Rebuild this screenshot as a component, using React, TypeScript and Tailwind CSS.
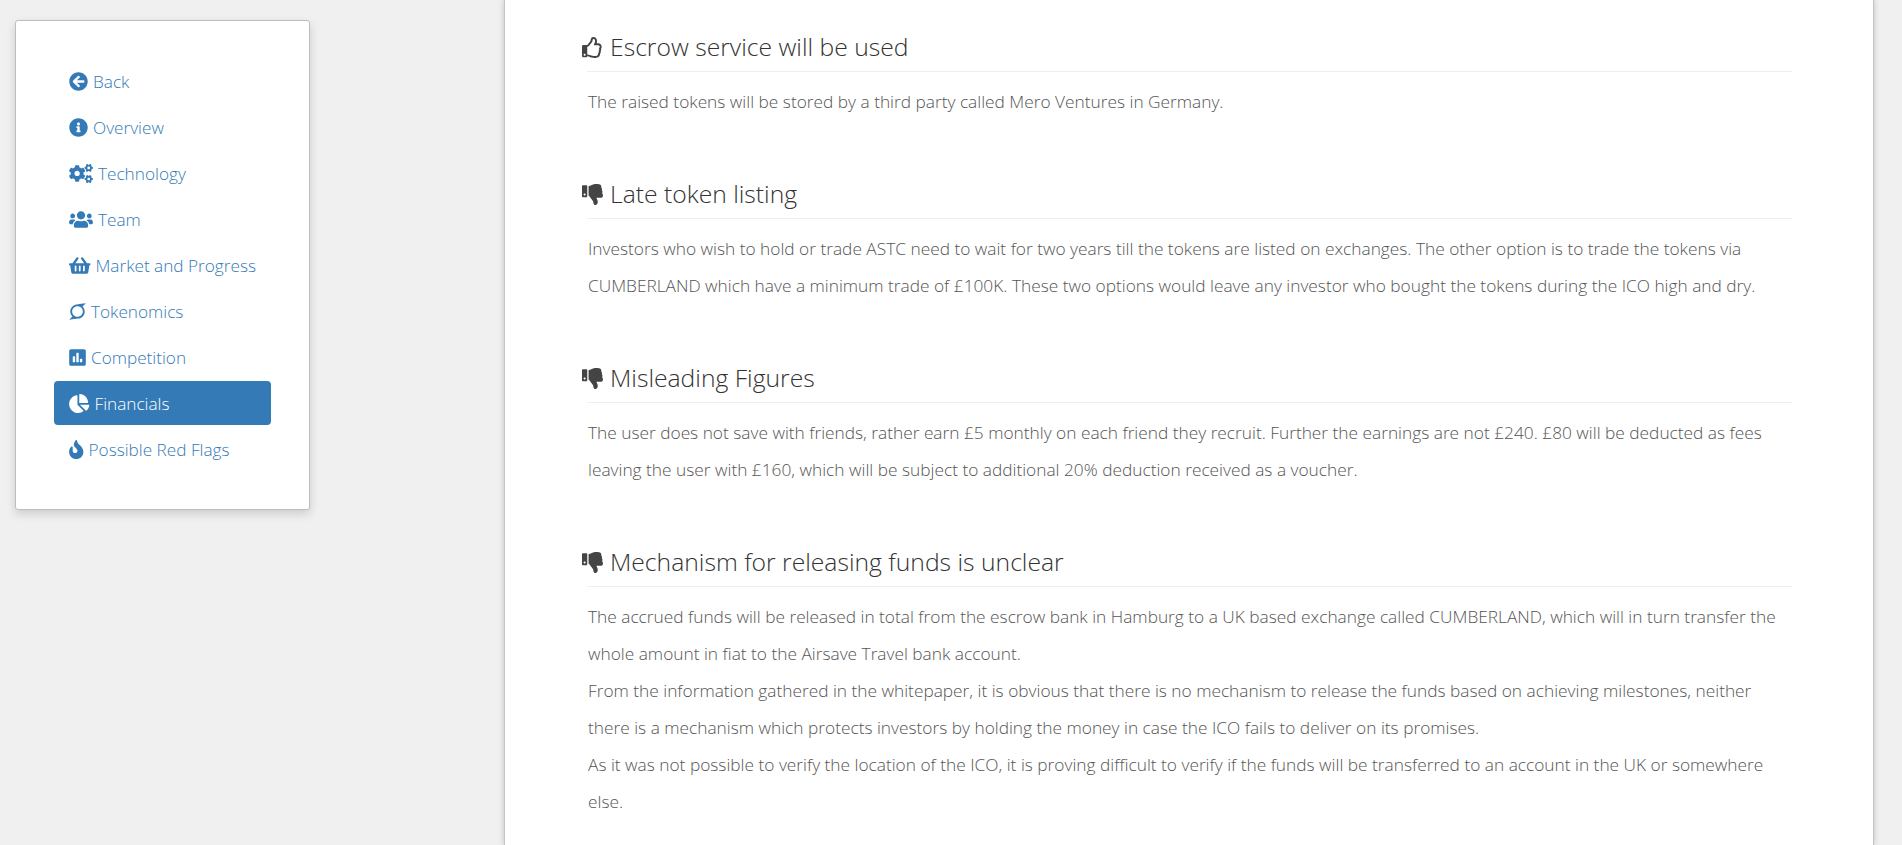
import { FaArrowCircleLeft, FaInfoCircle, FaCogs, FaUsers, FaShoppingBasket, FaSuperpowers, FaPoll, FaChartPie, FaFire, FaRegThumbsUp, FaThumbsDown } from 'react-icons/fa';
import type { IconType } from 'react-icons';

const navItems: { label: string; icon: IconType; iconClass: string; active?: boolean }[] = [
  { label: 'Back', icon: FaArrowCircleLeft, iconClass: 'w-[19px]' },
  { label: 'Overview', icon: FaInfoCircle, iconClass: 'w-[19px]' },
  { label: 'Technology', icon: FaCogs, iconClass: 'w-[24px]' },
  { label: 'Team', icon: FaUsers, iconClass: 'w-[24px]' },
  { label: 'Market and Progress', icon: FaShoppingBasket, iconClass: 'w-[21.5px]' },
  { label: 'Tokenomics', icon: FaSuperpowers, iconClass: 'w-[17px]' },
  { label: 'Competition', icon: FaPoll, iconClass: 'w-[17px]' },
  { label: 'Financials', icon: FaChartPie, iconClass: 'w-[20.5px]', active: true },
  { label: 'Possible Red Flags', icon: FaFire, iconClass: 'w-[14.5px]' },
];

const sections: { title: string; good?: boolean; lines: string[] }[] = [
  {
    title: 'Escrow service will be used',
    good: true,
    lines: ['The raised tokens will be stored by a third party called Mero Ventures in Germany.'],
  },
  {
    title: 'Late token listing',
    lines: [
      'Investors who wish to hold or trade ASTC need to wait for two years till the tokens are listed on exchanges. The other option is to trade the tokens via CUMBERLAND which have a minimum trade of £100K. These two options would leave any investor who bought the tokens during the ICO high and dry.',
    ],
  },
  {
    title: 'Misleading Figures',
    lines: [
      'The user does not save with friends, rather earn £5 monthly on each friend they recruit. Further the earnings are not £240. £80 will be deducted as fees leaving the user with £160, which will be subject to additional 20% deduction received as a voucher.',
    ],
  },
  {
    title: 'Mechanism for releasing funds is unclear',
    lines: [
      'The accrued funds will be released in total from the escrow bank in Hamburg to a UK based exchange called CUMBERLAND, which will in turn transfer the whole amount in fiat to the Airsave Travel bank account.',
      'From the information gathered in the whitepaper, it is obvious that there is no mechanism to release the funds based on achieving milestones, neither there is a mechanism which protects investors by holding the money in case the ICO fails to deliver on its promises.',
      'As it was not possible to verify the location of the ICO, it is proving difficult to verify if the funds will be transferred to an account in the UK or somewhere else.',
    ],
  },
];

export default function App() {
  return (
    <div className="flex h-[845px] items-start overflow-hidden bg-[#f0f0f0] font-['Open_Sans',sans-serif] font-light">
      {/* Sidebar */}
      <div className="ml-[15px] mt-[20px] w-[295px] shrink-0 rounded-[3px] border border-[#bdbdbd] bg-white px-[38px] py-[38px] shadow-[0_4px_10px_rgba(0,0,0,0.15)]">
        <ul className="flex flex-col gap-[2px]">
          {navItems.map((item) => {
            const Icon = item.icon;
            return (
              <li
                key={item.label}
                className={`flex h-[44px] items-center gap-[5px] rounded-[4px] px-[15px] text-[17.2px] ${item.active ? 'bg-[#337ab7] text-white' : 'text-[#337ab7]'}`}
              >
                <Icon className={`h-[19px] shrink-0 ${item.iconClass}`} />
                <span className="mt-[1px]">{item.label}</span>
              </li>
            );
          })}
        </ul>
      </div>

      {/* Main panel */}
      <div className="ml-[194px] h-[845px] w-[1370px] shrink-0 border-x border-[#c4c4c4] bg-white pl-[77px] pr-[81px] shadow-[0_0_6px_rgba(0,0,0,0.2)]">
        {sections.map((section) => (
          <div key={section.title} className="mb-[57px] first:mt-[30px]">
            <h3 className="flex items-center gap-[7px] text-[24.7px] leading-[34px] text-[#333]">
              {section.good ? <FaRegThumbsUp className="h-[21px] w-[21px] shrink-0 text-[#444]" /> : <FaThumbsDown className="h-[21px] w-[21px] shrink-0 text-[#444]" />}
              {section.title}
            </h3>
            <div className="ml-[5px] mt-[7px] border-t border-[#eee] pl-[1px] pt-[11px] text-[17.3px] leading-[37px] text-[#555]">
              {section.lines.map((line) => (
                <p key={line}>{line}</p>
              ))}
            </div>
          </div>
        ))}
      </div>
    </div>
  );
}
